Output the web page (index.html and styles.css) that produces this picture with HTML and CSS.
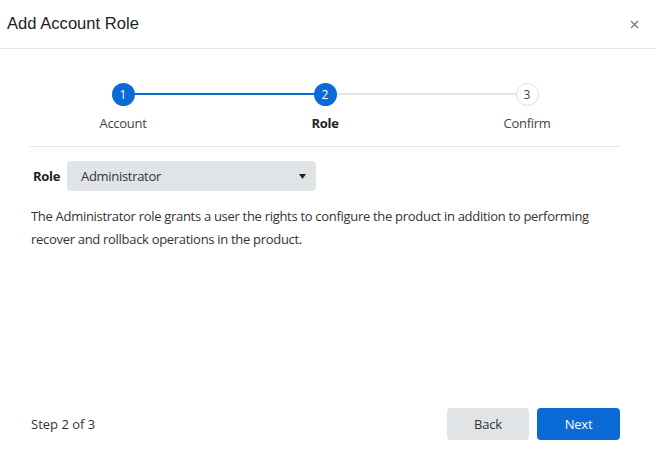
FILE: index.html
```html
<!DOCTYPE html>
<html>
<head>
<meta charset="utf-8">
<link rel="stylesheet" href="styles.css">
</head>
<body>
<div class="dialog">
  <header class="header">
    <h1 class="title">Add Account Role</h1>
    <button class="close" aria-label="Close">
      <svg width="9" height="9" viewBox="0 0 9 9"><path d="M1 1L8 8M8 1L1 8" stroke="#7a7a7a" stroke-width="1.3" fill="none"/></svg>
    </button>
  </header>
  <main class="body">
    <ol class="stepper">
      <li class="step done"><span class="dot">1</span><span class="label">Account</span></li>
      <li class="step current"><span class="dot">2</span><span class="label">Role</span></li>
      <li class="step todo"><span class="dot">3</span><span class="label">Confirm</span></li>
    </ol>
    <div class="field">
      <label class="field-label">Role</label>
      <div class="select">
        <span>Administrator</span>
        <svg class="caret" width="7" height="5" viewBox="0 0 7 5"><path d="M0 0H7L3.5 5Z" fill="#222"/></svg>
      </div>
    </div>
    <p class="desc">The Administrator role grants a user the rights to configure the product in addition to performing recover and rollback operations in the product.</p>
  </main>
  <footer class="footer">
    <span class="step-count">Step 2 of 3</span>
    <div class="actions">
      <button class="btn btn-secondary">Back</button>
      <button class="btn btn-primary">Next</button>
    </div>
  </footer>
</div>
</body>
</html>
```
FILE: styles.css
```css
* { box-sizing: border-box; }
html, body { margin: 0; padding: 0; background: #fff; }
body {
  font-family: "Open Sans", "Noto Sans", sans-serif;
  font-size: 13px;
  letter-spacing: -0.3px;
  color: #333;
}
.dialog {
  height: 458px;
  display: flex;
  flex-direction: column;
}
.header {
  height: 49px;
  border-bottom: 1px solid #e6e6e6;
  display: flex;
  align-items: center;
  justify-content: space-between;
  padding: 0 17px 0 7px;
}
.title {
  margin: 0;
  font-family: "Liberation Sans", Arial, sans-serif;
  font-weight: normal;
  font-size: 16.6px;
  letter-spacing: 0;
  color: #222;
}
.close {
  border: 0;
  background: none;
  padding: 0;
  width: 9px;
  height: 9px;
  display: flex;
}
.body {
  padding: 0 36px 0 30px;
  flex: 1;
}
.stepper {
  list-style: none;
  margin: 0;
  padding: 34px 0 0;
  height: 98px;
  border-bottom: 1px solid #e6e6e6;
  display: grid;
  grid-template-columns: repeat(3, 202px);
  justify-content: center;
}
.step {
  position: relative;
  display: flex;
  flex-direction: column;
  align-items: center;
  gap: 8px;
}
.step + .step::before {
  content: "";
  position: absolute;
  top: 10px;
  left: -50%;
  width: 100%;
  height: 2px;
  background: #e4e4e4;
}
.step.current::before { background: #0a6ad6; }
.dot {
  position: relative;
  z-index: 1;
  width: 23px;
  height: 23px;
  border-radius: 50%;
  display: flex;
  align-items: center;
  justify-content: center;
  font-size: 12px;
  letter-spacing: 0;
  background: #0a6ad6;
  color: #fff;
}
.todo .dot {
  background: #fff;
  border: 1px solid #e0e0e0;
  color: #444;
}
.label { color: #444; }
.current .label { font-weight: bold; color: #222; }
.field {
  display: flex;
  align-items: center;
  margin-top: 14px;
  padding-left: 3px;
}
.field-label {
  font-weight: bold;
  color: #222;
  width: 34px;
}
.select {
  width: 249px;
  height: 30px;
  background: #e1e4e7;
  border-radius: 4px;
  display: flex;
  align-items: center;
  justify-content: space-between;
  padding: 0 10px 0 14px;
  color: #333;
}
.caret { margin-top: 1px; }
.desc {
  margin: 14px 0 0;
  line-height: 23px;
  padding-left: 1px;
  color: #333;
}
.footer {
  display: flex;
  justify-content: space-between;
  align-items: center;
  padding: 0 36px 18px 31px;
}
.step-count { color: #333; letter-spacing: 0; }
.actions { display: flex; gap: 8px; }
.btn {
  font-family: inherit;
  font-size: 13px;
  letter-spacing: -0.2px;
  height: 32px;
  width: 83px;
  border: 0;
  border-radius: 4px;
}
.btn-secondary { background: #e1e4e7; color: #333; width: 82px; }
.btn-primary { background: #0a6ad6; color: #fff; }
```
